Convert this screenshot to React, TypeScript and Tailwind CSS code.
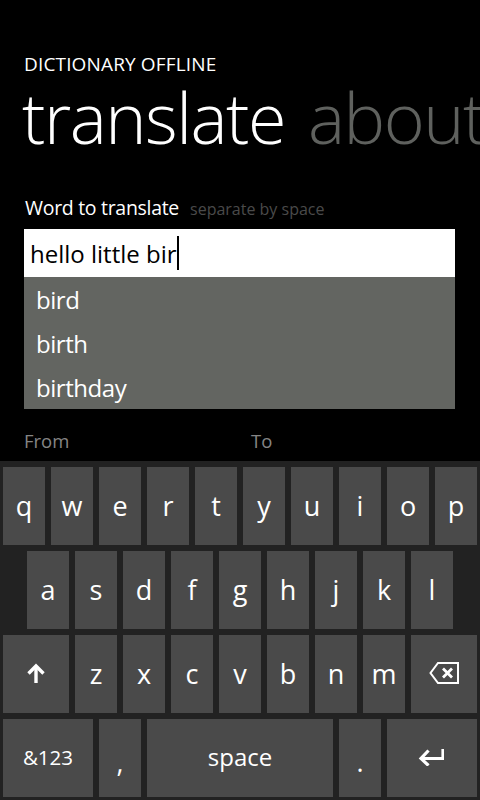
const rowOne = ["q", "w", "e", "r", "t", "y", "u", "i", "o", "p"];
const rowTwo = ["a", "s", "d", "f", "g", "h", "j", "k", "l"];
const rowThree = ["z", "x", "c", "v", "b", "n", "m"];

function Key({
  className = "w-[42px]",
  children,
}: {
  className?: string;
  children: React.ReactNode;
}) {
  return (
    <div
      className={`h-[78px] bg-[#4a4a4a] flex items-center justify-center text-white text-[27px] leading-none pb-[2px] ${className}`}
    >
      {children}
    </div>
  );
}

function ShiftIcon() {
  return (
    <svg width="18" height="20" viewBox="0 0 18 20" fill="none" stroke="white" strokeWidth="3.4">
      <path d="M9 20V3" />
      <path d="M1.5 10.5L9 3l7.5 7.5" />
    </svg>
  );
}

function BackspaceIcon() {
  return (
    <svg width="30" height="22" viewBox="0 0 30 22" fill="none" stroke="white">
      <path d="M29 1H9L1.5 11 9 21h20z" strokeWidth="2" />
      <path d="M14 6.5l9 9M23 6.5l-9 9" strokeWidth="2.8" />
    </svg>
  );
}

function EnterIcon() {
  return (
    <svg width="26" height="18" viewBox="0 0 26 18" fill="none" stroke="white" strokeWidth="3.2">
      <path d="M25 1v9.5H3" />
      <path d="M10.5 2.5L3 10.5l7.5 7" />
    </svg>
  );
}

export default function App() {
  return (
    <div
      className="w-[480px] h-[800px] bg-black overflow-hidden flex flex-col"
      style={{ fontFamily: '"Open Sans", "Noto Sans", sans-serif' }}
    >
      <div className="flex-1 pt-[52px] pl-[24px]">
        <div className="text-white text-[19px] leading-[24px] tracking-[0.15px]">DICTIONARY OFFLINE</div>
        <div className="flex gap-[23px] mt-[6px] ml-[-2px] whitespace-nowrap text-[70px] leading-[70px] font-light tracking-[-1.5px]">
          <span className="text-white">translate</span>
          <span className="text-[#5f615e]">about</span>
        </div>
        <div className="flex items-baseline gap-[11px] mt-[43px] pl-[1px] h-[26px]">
          <span className="text-white text-[19.5px] leading-[26px] tracking-[-0.3px]">Word to translate</span>
          <span className="text-[#4a4a4a] text-[16px] leading-[26px]">separate by space</span>
        </div>
        <div className="w-[431px] mt-[8px]">
          <div className="h-[48px] bg-white flex items-center pl-[6px] text-black text-[24px]">
            <span className="pt-[2px]">hello little bir</span>
            <span className="w-[2px] h-[34px] bg-black" />
          </div>
          <div className="h-[132px] bg-[#636561] pl-[12px] text-white text-[24px] tracking-[-0.45px]">
            <div className="h-[44px] leading-[46px]">bird</div>
            <div className="h-[44px] leading-[46px]">birth</div>
            <div className="h-[44px] leading-[46px]">birthday</div>
          </div>
        </div>
        <div className="flex mt-[20px] text-[#858585] text-[18.5px] leading-[24px]">
          <span className="w-[227px]">From</span>
          <span>To</span>
        </div>
      </div>
      <div className="h-[339px] bg-[#222222] pt-[6px] flex flex-col gap-[6px] pl-[3px]">
        <div className="flex gap-[6px]">
          {rowOne.map((k) => (
            <Key key={k}>{k}</Key>
          ))}
        </div>
        <div className="flex gap-[6px] pl-[24px]">
          {rowTwo.map((k) => (
            <Key key={k}>{k}</Key>
          ))}
        </div>
        <div className="flex gap-[6px]">
          <Key className="w-[66px]">
            <ShiftIcon />
          </Key>
          {rowThree.map((k) => (
            <Key key={k}>{k}</Key>
          ))}
          <Key className="w-[66px]">
            <BackspaceIcon />
          </Key>
        </div>
        <div className="flex gap-[6px]">
          <Key className="w-[90px]">
            <span className="text-[20.5px]">&amp;123</span>
          </Key>
          <Key>
            <span className="mt-[8px]">,</span>
          </Key>
          <Key className="w-[186px]">
            <span className="text-[24px]">space</span>
          </Key>
          <Key>
            <span className="mt-[8px]">.</span>
          </Key>
          <Key className="w-[90px] pr-[3px]">
            <EnterIcon />
          </Key>
        </div>
      </div>
    </div>
  );
}
